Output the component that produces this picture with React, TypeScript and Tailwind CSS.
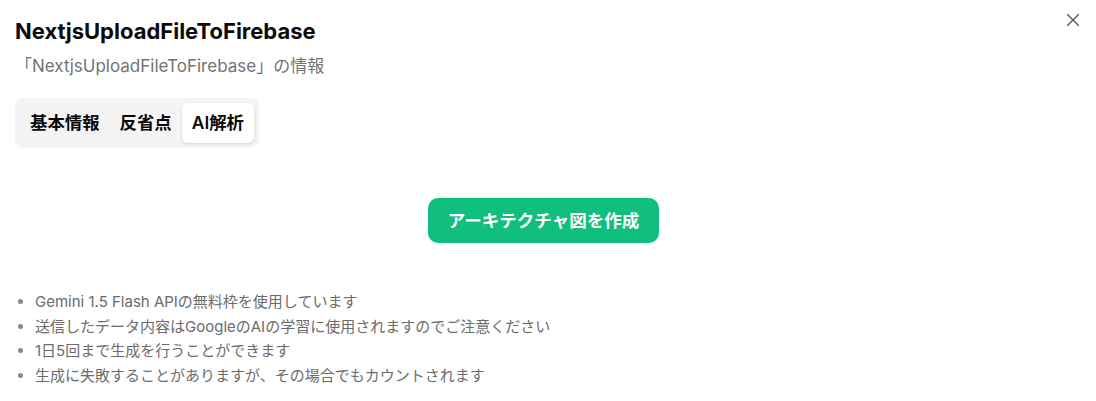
import React, { useState } from "react";

const tabs = ["基本情報", "反省点", "AI解析"];

const notes = [
  "Gemini 1.5 Flash APIの無料枠を使用しています",
  "送信したデータ内容はGoogleのAIの学習に使用されますのでご注意ください",
  "1日5回まで生成を行うことができます",
  "生成に失敗することがありますが、その場合でもカウントされます",
];

export default function App() {
  const [activeTab, setActiveTab] = useState("AI解析");

  return (
    <div
      className="relative min-h-[401px] w-full bg-white pr-6 pl-[15px] pt-4 text-[#0a0a0a]"
      style={{ fontFamily: 'Inter, "Noto Sans CJK JP", sans-serif' }}
    >
      {/* Close button */}
      <button
        type="button"
        className="absolute top-[14px] right-[17px] text-[#555] hover:text-black"
        aria-label="閉じる"
      >
        <svg width="12" height="12" viewBox="0 0 12 12" fill="none">
          <path
            d="M0.5 0.5 11.5 11.5M11.5 0.5 0.5 11.5"
            stroke="currentColor"
            strokeWidth="1.4"
            strokeLinecap="round"
          />
        </svg>
      </button>

      {/* Header */}
      <h2 className="text-[22px] leading-[30px] font-bold">
        NextjsUploadFileToFirebase
      </h2>
      <p className="mt-2 text-[17px] leading-6 text-[#737373]">
        「NextjsUploadFileToFirebase」の情報
      </p>

      {/* Tabs */}
      <div className="mt-5 inline-flex rounded-lg bg-[#f4f4f5] p-[5px]">
        {tabs.map((tab) => (
          <button
            key={tab}
            type="button"
            onClick={() => setActiveTab(tab)}
            className={`
              h-10 rounded-md px-[10px] text-[17.4px] leading-6 font-semibold
              ${activeTab === tab ? "bg-white shadow-[0_1px_3px_rgba(0,0,0,0.15)]" : ""}
            `}
          >
            {tab}
          </button>
        ))}
      </div>

      {/* Action */}
      <div className="mt-[50px] flex justify-center">
        <button
          type="button"
          className="h-[45px] rounded-[10px] bg-[#10bf7d] px-[20px] text-[17.5px] leading-[25px] font-bold text-white hover:bg-[#0ea96f]"
        >
          アーキテクチャ図を作成
        </button>
      </div>

      {/* Notes */}
      <ul className="mt-[47px] list-disc pl-[20px] text-[15px] leading-[24.5px] text-[#6b6b6b] marker:text-[#888]">
        {notes.map((note) => (
          <li key={note}>{note}</li>
        ))}
      </ul>
    </div>
  );
}
